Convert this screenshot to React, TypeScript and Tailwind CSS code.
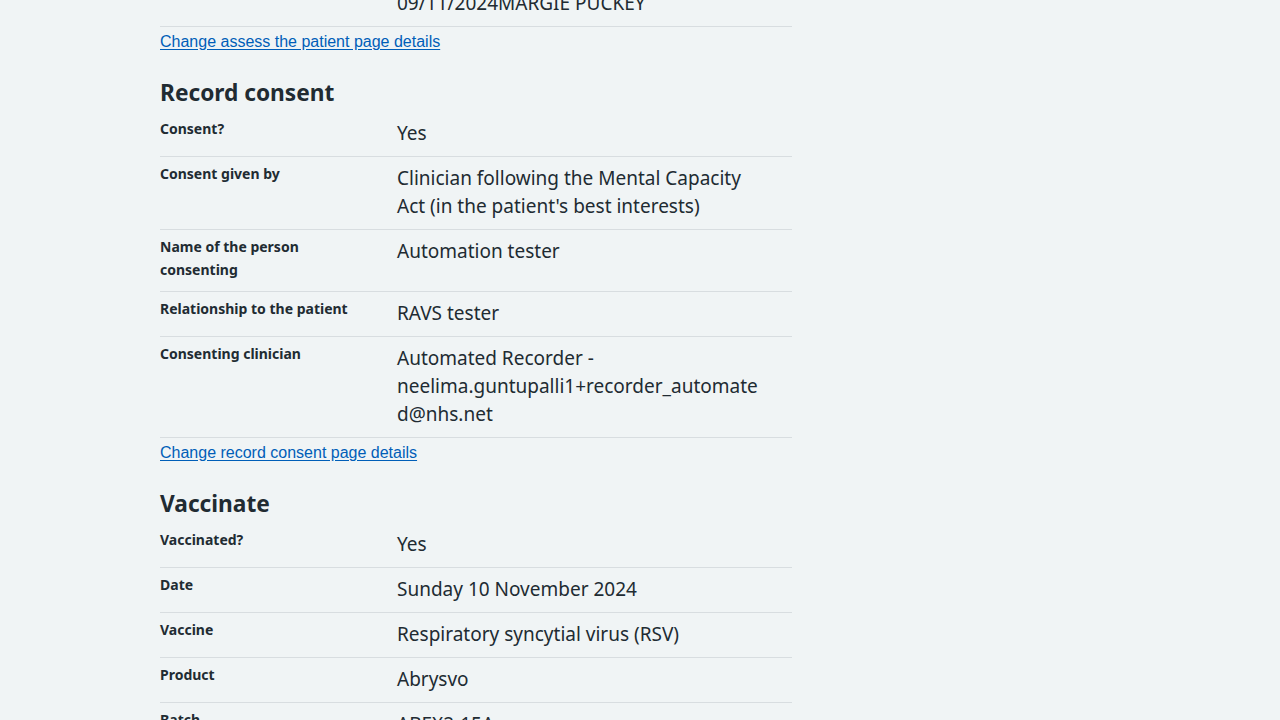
import React from "react"

type Row = { label: string; value: string[] | string }

const frutiger = "font-['Noto_Sans',sans-serif]"

function SummaryRow({ label, value }: Row) {
  const lines = Array.isArray(value) ? value : [value]
  return (
    <div className="flex border-b border-[#d8dde0]">
      <dt className="w-[237px] shrink-0 pt-[6px] pb-[10px] pr-6 text-[14px] leading-[22.5px] font-bold">{label}</dt>
      <dd className="flex-1 pt-[7px] pb-[9px] pr-6 text-[19px] leading-7 [overflow-wrap:anywhere]">
        {lines.map((l, i) => (
          <div key={i}>{l}</div>
        ))}
      </dd>
    </div>
  )
}

function Section({ title, rows, link }: { title?: string; rows: Row[]; link?: string }) {
  return (
    <section>
      {title && <h2 className="mt-[23px] mb-[3px] text-[22.7px] leading-8 font-bold">{title}</h2>}
      <dl>
        {rows.map((r) => (
          <SummaryRow key={r.label} {...r} />
        ))}
      </dl>
      {link && (
        <p className="mt-[3px] font-['Liberation_Sans',Arial,sans-serif] text-[16px] leading-6">
          <a href="#" className="text-[#005eb8] underline underline-offset-2">
            {link}
          </a>
        </p>
      )}
    </section>
  )
}

export default function App() {
  return (
    <div className={`min-h-screen overflow-hidden bg-[#f0f4f5] text-[#212b32] ${frutiger}`}>
      <main className="ml-[160px] w-[632px] -mt-[46px]">
        <Section
          rows={[{ label: "Assessed by", value: ["Automated Recorder", "09/11/2024MARGIE PUCKEY"] }]}
          link="Change assess the patient page details"
        />
        <Section
          title="Record consent"
          rows={[
            { label: "Consent?", value: "Yes" },
            { label: "Consent given by", value: "Clinician following the Mental Capacity Act (in the patient's best interests)" },
            { label: "Name of the person consenting", value: "Automation tester" },
            { label: "Relationship to the patient", value: "RAVS tester" },
            { label: "Consenting clinician", value: ["Automated Recorder -", "neelima.guntupalli1+recorder_automated@nhs.net"] },
          ]}
          link="Change record consent page details"
        />
        <Section
          title="Vaccinate"
          rows={[
            { label: "Vaccinated?", value: "Yes" },
            { label: "Date", value: "Sunday 10 November 2024" },
            { label: "Vaccine", value: "Respiratory syncytial virus (RSV)" },
            { label: "Product", value: "Abrysvo" },
            { label: "Batch", value: "ABEX2-15A" },
            { label: "Expiry date", value: "31/12/2025" },
          ]}
        />
      </main>
    </div>
  )
}
